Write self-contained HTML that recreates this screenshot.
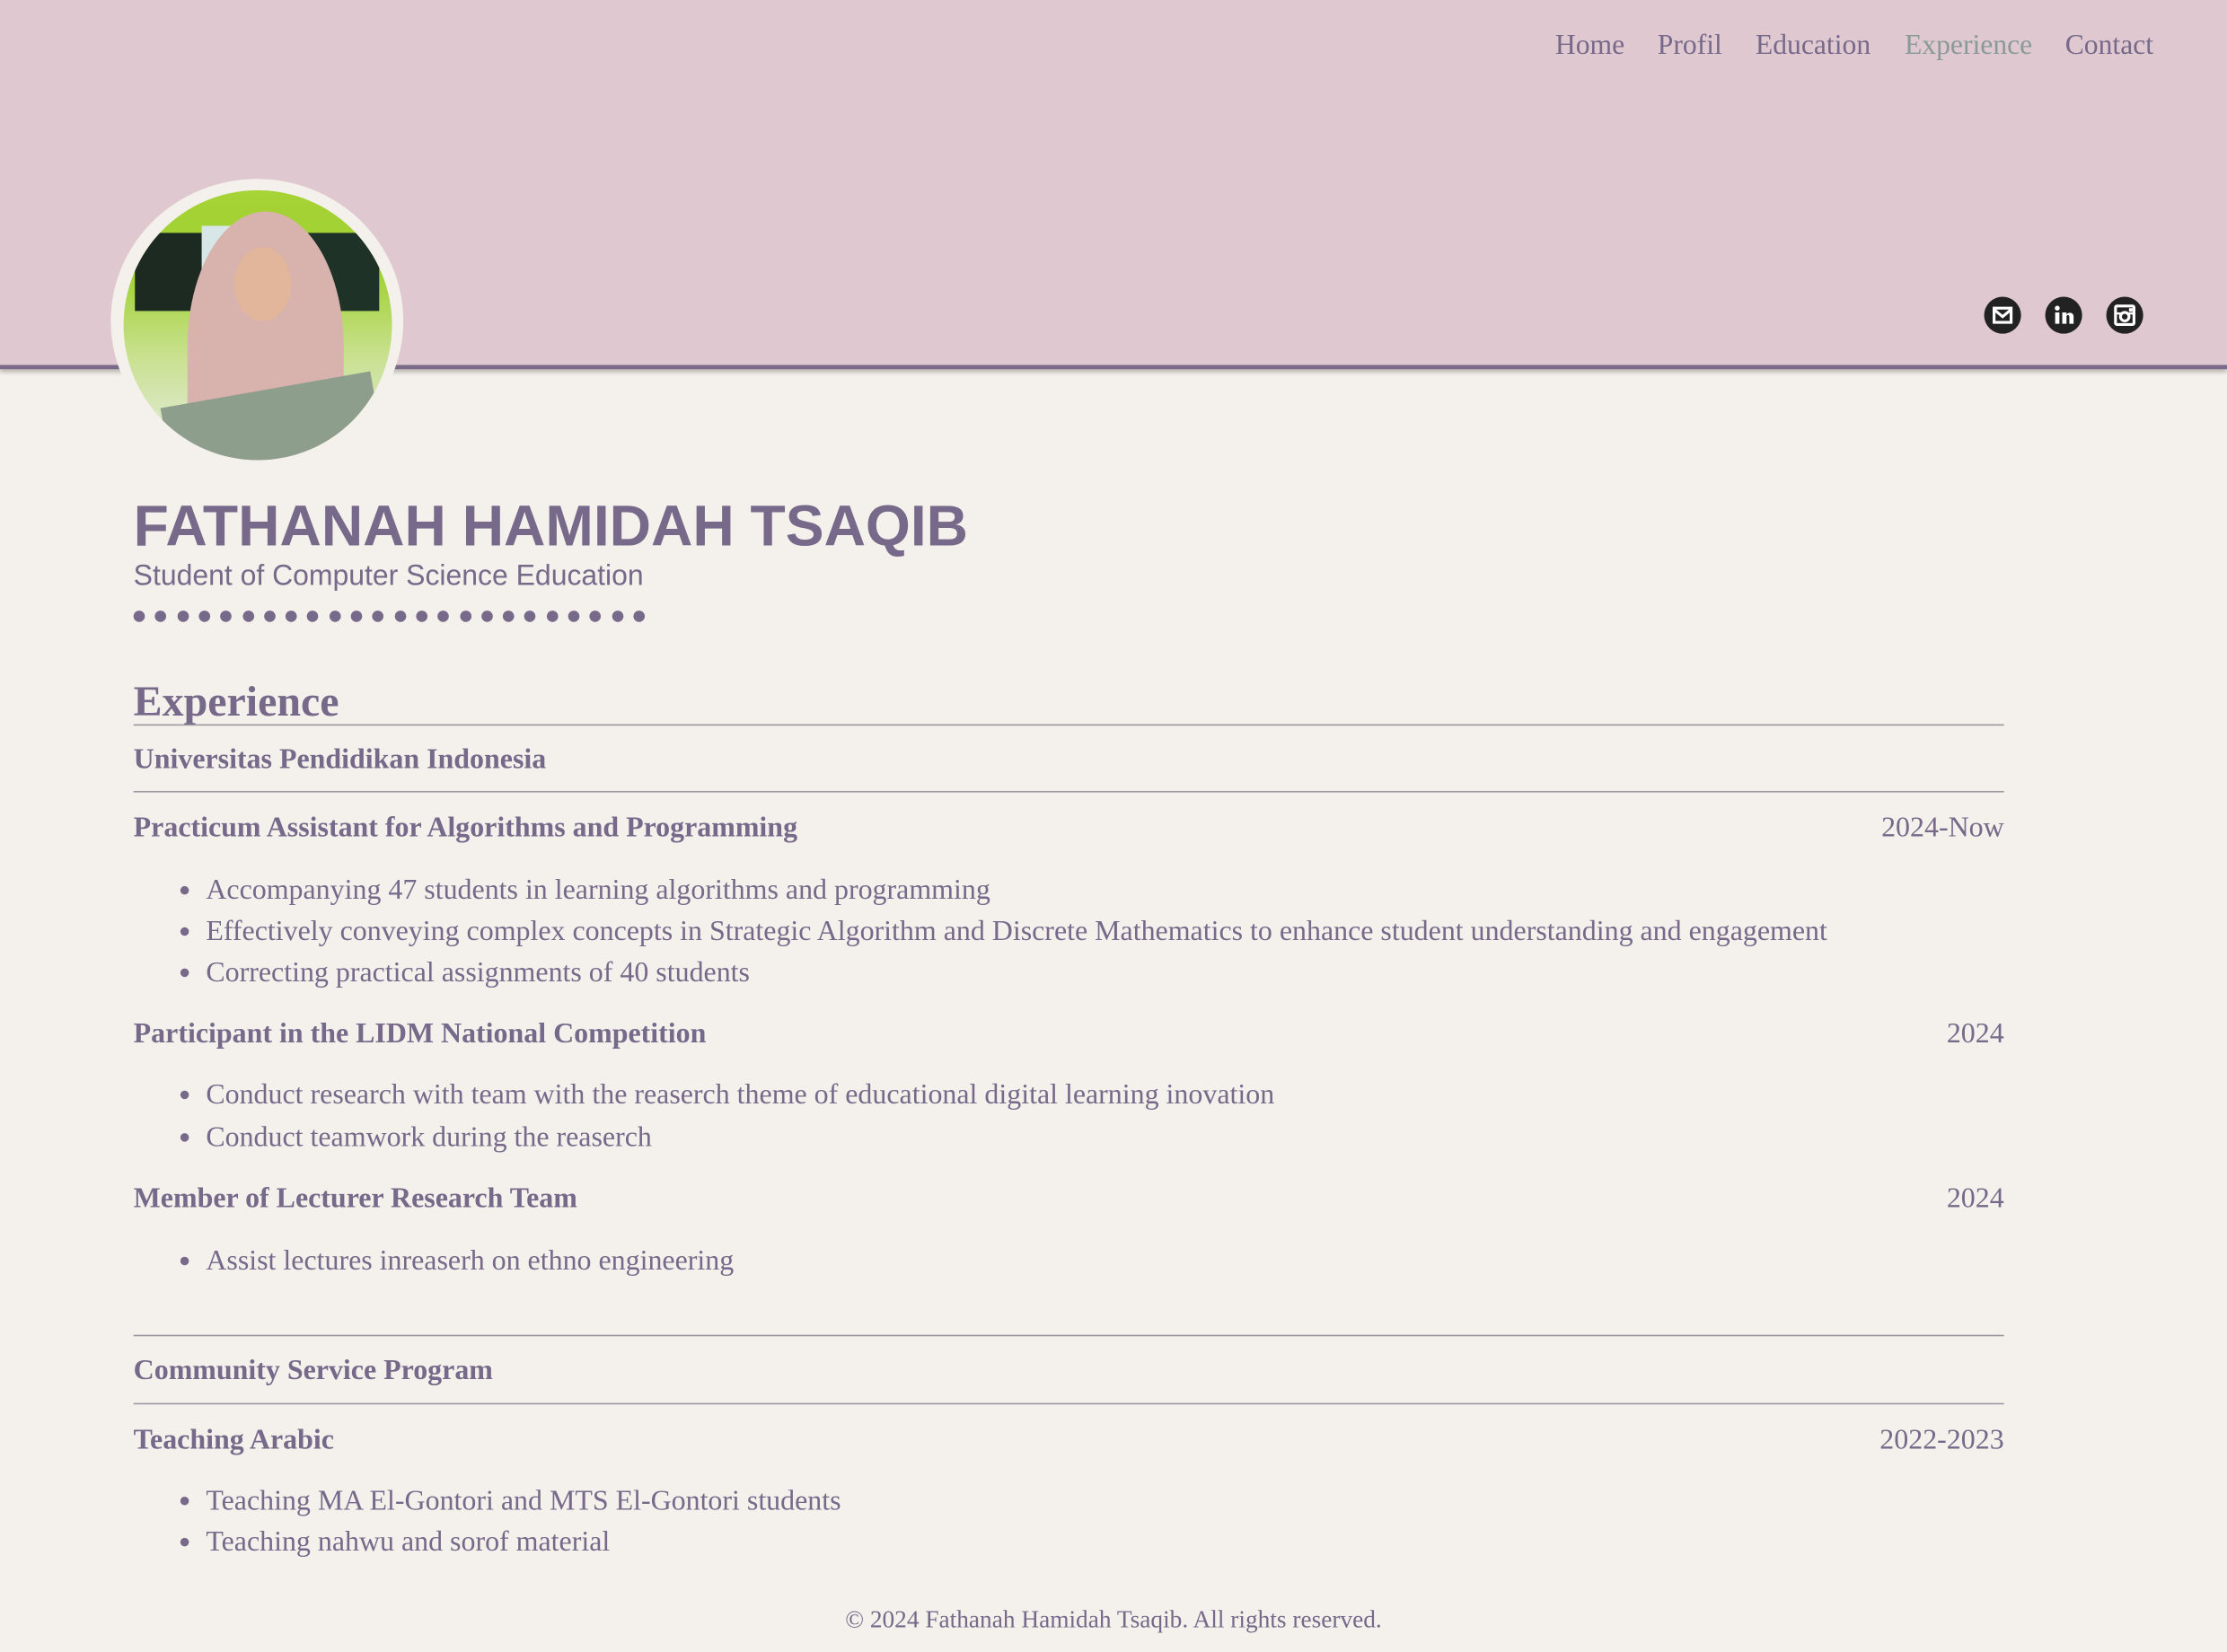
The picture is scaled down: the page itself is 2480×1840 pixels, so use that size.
<!DOCTYPE html>
<html><head><meta charset="utf-8"><style>
html,body{margin:0;padding:0;width:2480px;height:1840px;overflow:hidden;background:#f4f0eb}
#w{position:absolute;left:0;top:0;width:1568px;height:1163px;transform:scale(1.58163);transform-origin:0 0;font-family:"Liberation Serif",serif;color:#76698a}
.a{position:absolute;white-space:nowrap;line-height:1}
#hdr{position:absolute;left:0;top:0;width:1568px;height:257px;background:#dfc8cf;border-bottom:3px solid #7a6b88;box-shadow:0 2px 3px rgba(0,0,0,.25)}
.nav{font-size:20px;color:#76698a;top:22px}
.ic{position:absolute;top:209px;width:26px;height:26px;border-radius:50%;background:#222}
.b{font-weight:bold;font-size:20.2px}
.t{font-size:20.2px}
.line{position:absolute;left:94px;width:1317px;height:0;border-top:1.5px solid #9a97a0}
.dot{position:absolute;top:430px;width:8px;height:8px;border-radius:50%;background:#76698a}
.bl{position:absolute;width:6px;height:6px;border-radius:50%;background:#76698a;left:127px}
</style></head><body><div id="w">
<div id="hdr"></div>
<div class="a nav" style="left:1095px">Home</div>
<div class="a nav" style="left:1167px">Profil</div>
<div class="a nav" style="left:1236px">Education</div>
<div class="a nav" style="left:1341px;color:#8a9a98">Experience</div>
<div class="a nav" style="left:1454px">Contact</div>

<div class="ic" style="left:1397px"><svg width="26" height="26" viewBox="0 0 26 26"><rect x="7" y="8" width="12" height="10" fill="none" stroke="#fff" stroke-width="2"/><path d="M7 9 L13 14 L19 9" fill="none" stroke="#fff" stroke-width="2"/></svg></div>
<div class="ic" style="left:1440px"><svg width="26" height="26" viewBox="0 0 26 26"><rect x="7" y="11" width="3" height="8" fill="#fff"/><circle cx="8.5" cy="8" r="1.7" fill="#fff"/><path d="M12 19V11h3v1.5c1-1.8 5-2 5 1.5V19h-3v-5c0-1.5-2-1.5-2 0v5z" fill="#fff"/></svg></div>
<div class="ic" style="left:1483px"><svg width="26" height="26" viewBox="0 0 26 26"><rect x="6.5" y="6.5" width="13" height="13" rx="1" fill="none" stroke="#fff" stroke-width="2"/><rect x="6" y="11" width="14" height="1.5" fill="#fff"/><circle cx="13" cy="14" r="3" fill="#222" stroke="#fff" stroke-width="2"/><rect x="16" y="8" width="2.5" height="2.5" fill="#fff"/></svg></div>

<div style="position:absolute;left:78px;top:126px;width:206px;height:200px;border-radius:50%;background:#f4f0eb"></div>
<div style="position:absolute;left:87px;top:134px;width:189px;height:190px;border-radius:50%;overflow:hidden;background:linear-gradient(180deg,#a6d336 0%,#9fd130 30%,#c7e08c 60%,#e8eee6 100%)">
 <div style="position:absolute;left:8px;top:30px;width:60px;height:55px;background:#1d2a22"></div>
 <div style="position:absolute;left:100px;top:30px;width:80px;height:55px;background:#1f3228"></div>
 <div style="position:absolute;left:55px;top:25px;width:40px;height:55px;background:#d7e6e6"></div>
 <div style="position:absolute;left:45px;top:15px;width:110px;height:190px;border-radius:50% 50% 10% 10%;background:#d8b2ac"></div>
 <div style="position:absolute;left:78px;top:40px;width:40px;height:52px;border-radius:50%;background:#e2b69a"></div>
 <div style="position:absolute;left:30px;top:140px;width:150px;height:60px;background:#8e9e8c;transform:rotate(-10deg)"></div>
</div>

<div class="a" style="left:94px;top:350px;font-family:'Liberation Sans',sans-serif;font-weight:bold;font-size:40.6px;color:#76698a">FATHANAH HAMIDAH TSAQIB</div>
<div class="a" style="left:94px;top:396px;font-family:'Liberation Sans',sans-serif;font-size:20.2px">Student of Computer Science Education</div>

<div class="a" style="left:94px;top:479px;font-size:30.3px;font-weight:bold">Experience</div>
<div class="line" style="top:510px"></div>
<div class="a b" style="left:94px;top:525px">Universitas Pendidikan Indonesia</div>
<div class="line" style="top:557px"></div>
<div class="a b" style="left:94px;top:573px">Practicum Assistant for Algorithms and Programming</div>
<div class="a t" style="right:157px;top:573px">2024-Now</div>
<div class="bl" style="top:624px"></div><div class="a t" style="left:145px;top:617px">Accompanying 47 students in learning algorithms and programming</div>
<div class="bl" style="top:653px"></div><div class="a t" style="left:145px;top:646px">Effectively conveying complex concepts in Strategic Algorithm and Discrete Mathematics to enhance student understanding and engagement</div>
<div class="bl" style="top:682px"></div><div class="a t" style="left:145px;top:675px">Correcting practical assignments of 40 students</div>
<div class="a b" style="left:94px;top:718px">Participant in the LIDM National Competition</div>
<div class="a t" style="right:157px;top:718px">2024</div>
<div class="bl" style="top:768px"></div><div class="a t" style="left:145px;top:761px">Conduct research with team with the reaserch theme of educational digital learning inovation</div>
<div class="bl" style="top:798px"></div><div class="a t" style="left:145px;top:791px">Conduct teamwork during the reaserch</div>
<div class="a b" style="left:94px;top:834px">Member of Lecturer Research Team</div>
<div class="a t" style="right:157px;top:834px">2024</div>
<div class="bl" style="top:885px"></div><div class="a t" style="left:145px;top:878px">Assist lectures inreaserh on ethno engineering</div>
<div class="line" style="top:940px"></div>
<div class="a b" style="left:94px;top:955px">Community Service Program</div>
<div class="line" style="top:988px"></div>
<div class="a b" style="left:94px;top:1004px">Teaching Arabic</div>
<div class="a t" style="right:157px;top:1004px">2022-2023</div>
<div class="bl" style="top:1054px"></div><div class="a t" style="left:145px;top:1047px">Teaching MA El-Gontori and MTS El-Gontori students</div>
<div class="bl" style="top:1083px"></div><div class="a t" style="left:145px;top:1076px">Teaching nahwu and sorof material</div>
<div class="a" style="left:0;width:1568px;text-align:center;top:1132px;font-size:17.3px">© 2024 Fathanah Hamidah Tsaqib. All rights reserved.</div>

<div class="dot" style="left:94px"></div><div class="dot" style="left:109.3px"></div><div class="dot" style="left:124.6px"></div><div class="dot" style="left:139.9px"></div><div class="dot" style="left:155.2px"></div><div class="dot" style="left:170.5px"></div><div class="dot" style="left:185.8px"></div><div class="dot" style="left:201.1px"></div><div class="dot" style="left:216.4px"></div><div class="dot" style="left:231.7px"></div><div class="dot" style="left:247px"></div><div class="dot" style="left:262.3px"></div><div class="dot" style="left:277.6px"></div><div class="dot" style="left:292.9px"></div><div class="dot" style="left:308.2px"></div><div class="dot" style="left:323.5px"></div><div class="dot" style="left:338.8px"></div><div class="dot" style="left:354.1px"></div><div class="dot" style="left:369.4px"></div><div class="dot" style="left:384.7px"></div><div class="dot" style="left:400px"></div><div class="dot" style="left:415.3px"></div><div class="dot" style="left:430.6px"></div><div class="dot" style="left:445.9px"></div>
</div></body></html>
